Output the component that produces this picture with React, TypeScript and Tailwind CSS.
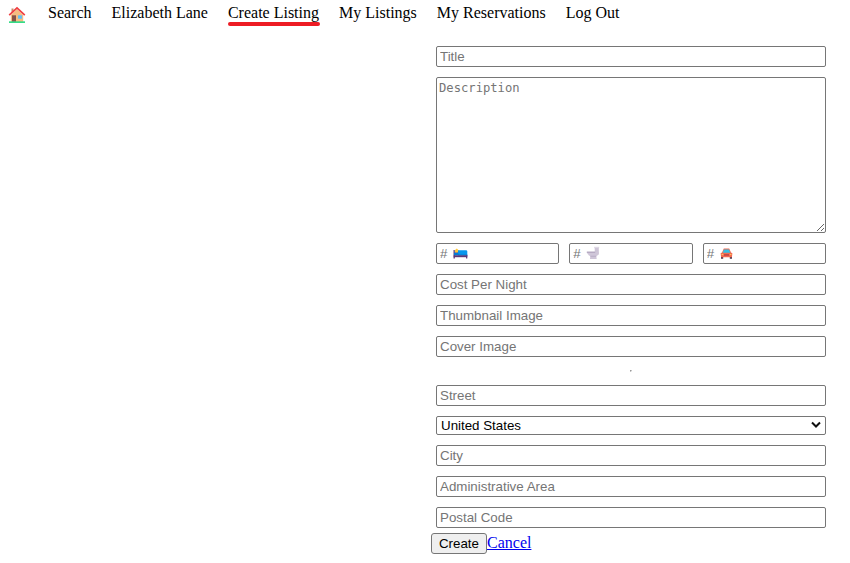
import type { ReactNode } from "react";

const field =
  "block h-[21px] w-full rounded-[2px] border border-[#767676] bg-white px-[3px] py-0 font-['Liberation_Sans',Arial,sans-serif] text-[13.333px] leading-[17px] text-black placeholder:text-[#757575] placeholder:opacity-100";

function HouseIcon() {
  return (
    <svg className="block h-[18px] w-[18px]" viewBox="0 0 18 18">
      <path d="M3.5 2.5h2v4h-2z" fill="#c98a68" />
      <path d="M2.8 9 9 3l6.2 6v7H2.8z" fill="#f5bd82" />
      <path d="M1.2 9.2 9 2l7.8 7.2" fill="none" stroke="#ef3f42" strokeWidth="1.7" />
      <path d="M4 9.3h4V16H4z" fill="#875447" />
      <path d="M10 9.3h4v3.4h-4z" fill="#62bff5" />
      <path d="M1 15.3h16V17H1z" fill="#35dc87" />
    </svg>
  );
}

function BedIcon() {
  return (
    <svg className="block h-[14px] w-[15px]" viewBox="0 0 15 14">
      <path d="M.5 4h1.4v8.5H.5zM13 9h1.3v3.5H13z" fill="#62407c" />
      <path d="M1 4h3l2 3H1z" fill="#4b5cae" />
      <path d="M1.6 4.4 3.8 2.6l2 2-1.2 1.8H2.2z" fill="#ffc83d" />
      <path d="M5 4.2h8q1.3 0 1.3 1.3V9.5H5z" fill="#0797ed" />
      <path d="M1 7h4l1 1.4h8.3v1H1z" fill="#087bd2" />
      <path d="M.7 9.3h13.6v1.9H.7z" fill="#593979" />
    </svg>
  );
}

function ToiletIcon() {
  return (
    <svg className="block h-[14px] w-[14px]" viewBox="0 0 14 14">
      <path d="M8.6 1.4h4.2v6.8l-1.5 1.3H9z" fill="#cdc4d6" />
      <path d="M8.2.8h5v1.3h-5z" fill="#ded8e4" />
      <path d="M.8 5.8h11.7v2.4l-2.3 1.9.5 2.9H3.9l.5-2.8Q1.2 9.2.8 5.8z" fill="#cfc6d8" />
      <path d="M.8 5.6h8.4V7H.8z" fill="#b7abc3" />
      <path d="M4.4 9.8h5.9v1H4.2z" fill="#b9adc5" />
    </svg>
  );
}

function CarIcon() {
  return (
    <svg className="block h-[14px] w-[13px]" viewBox="0 0 13 14">
      <path d="M1 10h2.2v2.7H1zM9.8 10H12v2.7H9.8z" fill="#47384f" />
      <path d="M3.8 2.6h5.4l1.8 3.8 1.4.8-.5 4H1.1l-.5-4L2 6.4z" fill="#f36b52" />
      <path d="M4 3.6h5l1.3 3.2H2.7z" fill="#35bfe5" />
      <path d="M4 8.2h5v1.5H4z" fill="#b94448" />
      <path d="M1.6 8h1.6v1H1.6zM9.8 8h1.6v1H9.8z" fill="#ffc557" />
    </svg>
  );
}

function CountField({ label, children }: { label: string; children: ReactNode }) {
  return (
    <div className="relative min-w-0 flex-1">
      <input className={field} placeholder="#" aria-label={label} />
      <span className="pointer-events-none absolute left-[17px] top-[3px]">{children}</span>
    </div>
  );
}

export default function App() {
  return (
    <div className="min-h-[563px] bg-white font-['Liberation_Serif','Times_New_Roman',serif] text-[16px] leading-[18px] text-black">
      <nav className="flex h-[36px] items-start gap-[20px] pl-[8px] pt-[4px]">
        <a className="block w-[20px] pt-[2px]" aria-label="Home"><HouseIcon /></a>
        <a>Search</a>
        <a>Elizabeth Lane</a>
        <a className="relative">
          Create Listing
          <span className="absolute left-0 top-[18px] h-[4px] w-[92px] rounded-full bg-[#ed1c24]" />
        </a>
        <a>My Listings</a>
        <a>My Reservations</a>
        <a>Log Out</a>
      </nav>
      <form className="ml-[431px] w-[400px]" onSubmit={(e) => e.preventDefault()}>
        <div className="flex flex-col gap-[10px] px-[5px] pt-[10px]">
          <input className={field} placeholder="Title" />
          <textarea
            className="block h-[156px] w-full resize rounded-[2px] border border-[#767676] p-[2px] font-['DejaVu_Sans_Mono',monospace] text-[12.18px] leading-[16px] placeholder:text-[#757575] placeholder:opacity-100"
            placeholder="Description"
          />
          <div className="flex gap-[10px]">
            <CountField label="Beds"><BedIcon /></CountField>
            <CountField label="Bathrooms"><ToiletIcon /></CountField>
            <CountField label="Parking"><CarIcon /></CountField>
          </div>
          <input className={field} placeholder="Cost Per Night" />
          <input className={field} placeholder="Thumbnail Image" />
          <input className={field} placeholder="Cover Image" />
          <div className="flex h-[8px] justify-center pt-[3px]">
            <hr className="h-[2px] w-[2px] border border-[#eeeeee] border-l-[#9a9a9a] border-t-[#9a9a9a]" />
          </div>
          <input className={field} placeholder="Street" />
          <div className="relative">
            <select className="block h-[19px] w-full appearance-none rounded-[2px] border border-[#767676] bg-white px-[4px] py-0 font-['Liberation_Sans',Arial,sans-serif] text-[13.333px] leading-[17px] text-black">
              <option>United States</option>
            </select>
            <svg className="pointer-events-none absolute right-[5px] top-[5px] h-[8px] w-[10px]" viewBox="0 0 10 8">
              <path d="m1 1.5 4 4 4-4" fill="none" stroke="#101010" strokeWidth="2" />
            </svg>
          </div>
          <input className={field} placeholder="City" />
          <input className={field} placeholder="Administrative Area" />
          <input className={field} placeholder="Postal Code" />
        </div>
        <div className="flex items-start pt-[5px]">
          <button className="h-[21px] w-[56px] rounded-[3px] border border-[#767676] bg-[#efefef] font-['Liberation_Sans',Arial,sans-serif] text-[13.333px] leading-[19px]">Create</button>
          <a className="pt-px text-[#0000ee] underline">Cancel</a>
        </div>
      </form>
    </div>
  );
}
